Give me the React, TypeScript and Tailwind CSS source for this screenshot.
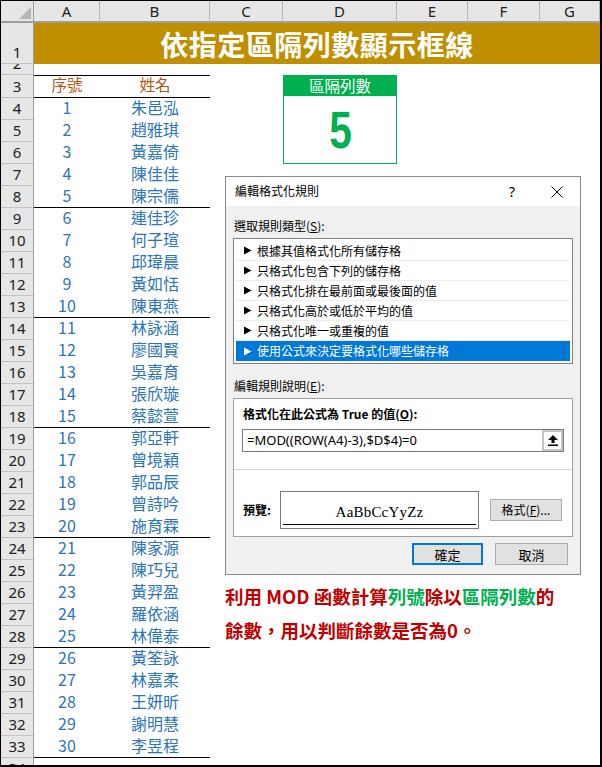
import React from "react";

const names = [
  "朱邑泓", "趙雅琪", "黃嘉倚", "陳佳佳", "陳宗儒",
  "連佳珍", "何子瑄", "邱瑋晨", "黃如恬", "陳東燕",
  "林詠涵", "廖國賢", "吳嘉育", "張欣璇", "蔡懿萱",
  "郭亞軒", "曾境穎", "郭品辰", "曾詩吟", "施育霖",
  "陳家源", "陳巧兒", "黃羿盈", "羅依涵", "林偉泰",
  "黃筌詠", "林嘉柔", "王妍昕", "謝明慧", "李昱程",
];

const cols = ["A", "B", "C", "D", "E", "F", "G"];

const rules = [
  "根據其值格式化所有儲存格",
  "只格式化包含下列的儲存格",
  "只格式化排在最前面或最後面的值",
  "只格式化高於或低於平均的值",
  "只格式化唯一或重複的值",
  "使用公式來決定要格式化哪些儲存格",
];

function RowHead({ n }: { n: number }) {
  return (
    <div className="flex items-end justify-center overflow-hidden bg-[#e6e6e6] border-r border-r-[#9e9e9e] border-b border-b-[#c2c2c2] text-[15px] leading-[21px] text-[#222] font-['Noto_Sans','Liberation_Sans',sans-serif]">
      {n}
    </div>
  );
}

function Tri({ white }: { white?: boolean }) {
  return (
    <svg width="9" height="9" viewBox="0 0 9 9" className="shrink-0">
      <polygon points="1,0.5 8.5,4.5 1,8.5" fill={white ? "#fff" : "#000"} />
    </svg>
  );
}

function Dialog() {
  return (
    <div className="absolute left-[224px] top-[175px] w-[356px] h-[399px] border border-[#8a8a8a] bg-[#f0f0f0] flex flex-col text-[12px] text-black font-['Noto_Sans_CJK_TC','Noto_Sans',sans-serif]">
      <div className="h-[29px] bg-white flex items-center pl-[9px] pr-[17px]">
        <span className="flex-1 leading-none -mt-[2px]">編輯格式化規則</span>
        <span className="text-[14px] leading-none mr-[36px] font-['Noto_Sans',sans-serif]">?</span>
        <svg width="12" height="12" viewBox="0 0 12 12">
          <path d="M0.5 0.5 L11.5 11.5 M11.5 0.5 L0.5 11.5" stroke="#000" strokeWidth="1" />
        </svg>
      </div>
      <div className="flex flex-col px-[7px] pt-[12px]">
        <div className="h-[16px] leading-[16px] pl-[1px]">
          選取規則類型(<u>S</u>):
        </div>
        <div className="mt-[4px] h-[126px] border border-[#828282] bg-white p-[2px] flex flex-col">
          {rules.map((r, i) => (
            <div
              key={r}
              className={
                i === 5
                  ? "h-[20px] flex items-center gap-[5px] pl-[7px] bg-[#0078d7] text-white"
                  : "h-[20px] flex items-center gap-[5px] pl-[7px] border-b border-b-[#ececec]"
              }
            >
              <Tri white={i === 5} />
              <span className="leading-none">{r}</span>
            </div>
          ))}
        </div>
        <div className="mt-[14px] h-[16px] leading-[16px] pl-[1px]">
          編輯規則說明(<u>E</u>):
        </div>
        <div className="mt-[4px] h-[139px] border border-[#a0a0a0] bg-white flex flex-col pt-[7px]">
          <div className="h-[16px] leading-[16px] pl-[9px] font-bold">
            格式化在此公式為 True 的值(<u>O</u>):
          </div>
          <div className="mt-[7px] ml-[8px] w-[322px] h-[23px] border border-[#7a7a7a] flex items-center">
            <span className="flex-1 pl-[4px] text-[13px] leading-none font-['Noto_Sans',sans-serif]">
              =MOD((ROW(A4)-3),$D$4)=0
            </span>
            <div className="w-[21px] h-[21px] border-2 border-[#c4c4c4] bg-white flex items-center justify-center">
              <svg width="10" height="11" viewBox="0 0 10 11">
                <polygon points="5,0 10,5 6.5,5 6.5,8 3.5,8 3.5,5 0,5" fill="#000" />
                <rect x="0" y="9.5" width="10" height="1.5" fill="#000" />
              </svg>
            </div>
          </div>
          <div className="mt-[17px] h-px bg-[#d4d4d4]" />
          <div className="mt-[21px] flex items-center pl-[9px]">
            <span className="w-[37px] font-bold leading-none">預覽:</span>
            <div className="w-[199px] h-[38px] border border-[#7a7a7a] bg-white flex flex-col items-center justify-end pb-[3px]">
              <span className="text-[15px] leading-[18px] font-['Liberation_Serif',serif] tracking-[0.2px]">
                AaBbCcYyZz
              </span>
              <div className="mt-[3px] w-[193px] h-px bg-black" />
            </div>
            <div className="ml-[11px] w-[72px] h-[22px] border border-[#adadad] bg-[#e1e1e1] flex items-center justify-center leading-none">
              格式(<u>F</u>)...
            </div>
          </div>
        </div>
        <div className="mt-[6px] flex justify-end pr-[5px] gap-[12px]">
          <div className="w-[71px] h-[22px] border-2 border-[#0078d7] bg-[#e1e1e1] flex items-center justify-center text-[13px] leading-none">
            確定
          </div>
          <div className="w-[73px] h-[22px] border border-[#adadad] bg-[#e1e1e1] flex items-center justify-center text-[13px] leading-none">
            取消
          </div>
        </div>
      </div>
    </div>
  );
}

export default function App() {
  const dataRows = names.map((nm, i) => {
    const r = i + 4;
    const boundary = (i + 1) % 5 === 0;
    const cellCls = boundary
      ? "flex items-center justify-center pb-[4px] border-b border-b-black text-[16px] leading-none text-[#2e75b6]"
      : "flex items-center justify-center pb-[4px] text-[16px] leading-none text-[#2e75b6]";
    return (
      <React.Fragment key={r}>
        <RowHead n={r} />
        <div className={cellCls}>{i + 1}</div>
        <div className={cellCls}>{nm}</div>
        {r <= 6 ? (
          <>
            <div />
            <div className="col-span-3" />
          </>
        ) : (
          <div className="col-span-5" />
        )}
      </React.Fragment>
    );
  });

  return (
    <div className="relative w-[602px] h-[767px] overflow-hidden bg-white border-t border-l border-b-2 border-r-2 border-black font-['Noto_Sans_CJK_TC','Noto_Sans',sans-serif]">
      <div className="grid grid-cols-[33px_66px_110px_73px_114px_71px_72px_1fr] grid-rows-[22px_41px_11px_23px_repeat(31,22px)]">
        {/* column headers */}
        <div className="relative bg-[#e6e6e6] border-r border-r-[#9e9e9e] border-b-2 border-b-[#9e9e9e]">
          <svg className="absolute right-[2px] bottom-[2px]" width="12" height="12" viewBox="0 0 12 12">
            <polygon points="12,0 12,12 0,12" fill="#b5b5b5" />
          </svg>
        </div>
        {cols.map((c) => (
          <div
            key={c}
            className="flex items-center justify-center bg-[#e6e6e6] border-r border-r-[#b8b8b8] border-b-2 border-b-[#9e9e9e] text-[15px] leading-none text-[#222] font-['Noto_Sans','Liberation_Sans',sans-serif]"
          >
            {c}
          </div>
        ))}

        {/* row 1 */}
        <RowHead n={1} />
        <div className="col-span-7 bg-[#bf8f00] flex items-center justify-center text-white text-[28px] font-bold leading-none tracking-[0.5px]">
          依指定區隔列數顯示框線
        </div>

        {/* row 2 */}
        <RowHead n={2} />
        <div className="col-span-7" />

        {/* row 3 */}
        <RowHead n={3} />
        <div className="flex items-center justify-center pb-[4px] border-t border-b border-black text-[15.5px] leading-none text-[#b3560f]">
          序號
        </div>
        <div className="flex items-center justify-center pb-[4px] border-t border-b border-black text-[15.5px] leading-none text-[#b3560f]">
          姓名
        </div>
        <div />
        <div className="row-span-4 flex flex-col">
          <div className="h-[21px] bg-[#00b050] flex items-center justify-center text-white text-[15.5px] leading-none">
            區隔列數
          </div>
          <div className="flex-1 border-x border-b border-[#00b050] flex items-center justify-center">
            <span className="inline-block scale-x-[0.78] text-[52px] leading-none font-bold text-[#00b050] font-['Liberation_Sans',sans-serif]">
              5
            </span>
          </div>
        </div>
        <div className="col-span-3" />

        {dataRows}

        {/* row 34 */}
        <RowHead n={34} />
        <div className="col-span-7" />
      </div>

      <Dialog />

      <div className="absolute left-[224px] top-[578px] w-[376px] text-[18.5px] font-bold leading-[34px] text-[#c00000]">
        <div>
          利用 MOD 函數計算<span className="text-[#00b050]">列號</span>除以<span className="text-[#00b050]">區隔列數</span>的
        </div>
        <div>餘數，用以判斷餘數是否為0。</div>
      </div>
    </div>
  );
}
